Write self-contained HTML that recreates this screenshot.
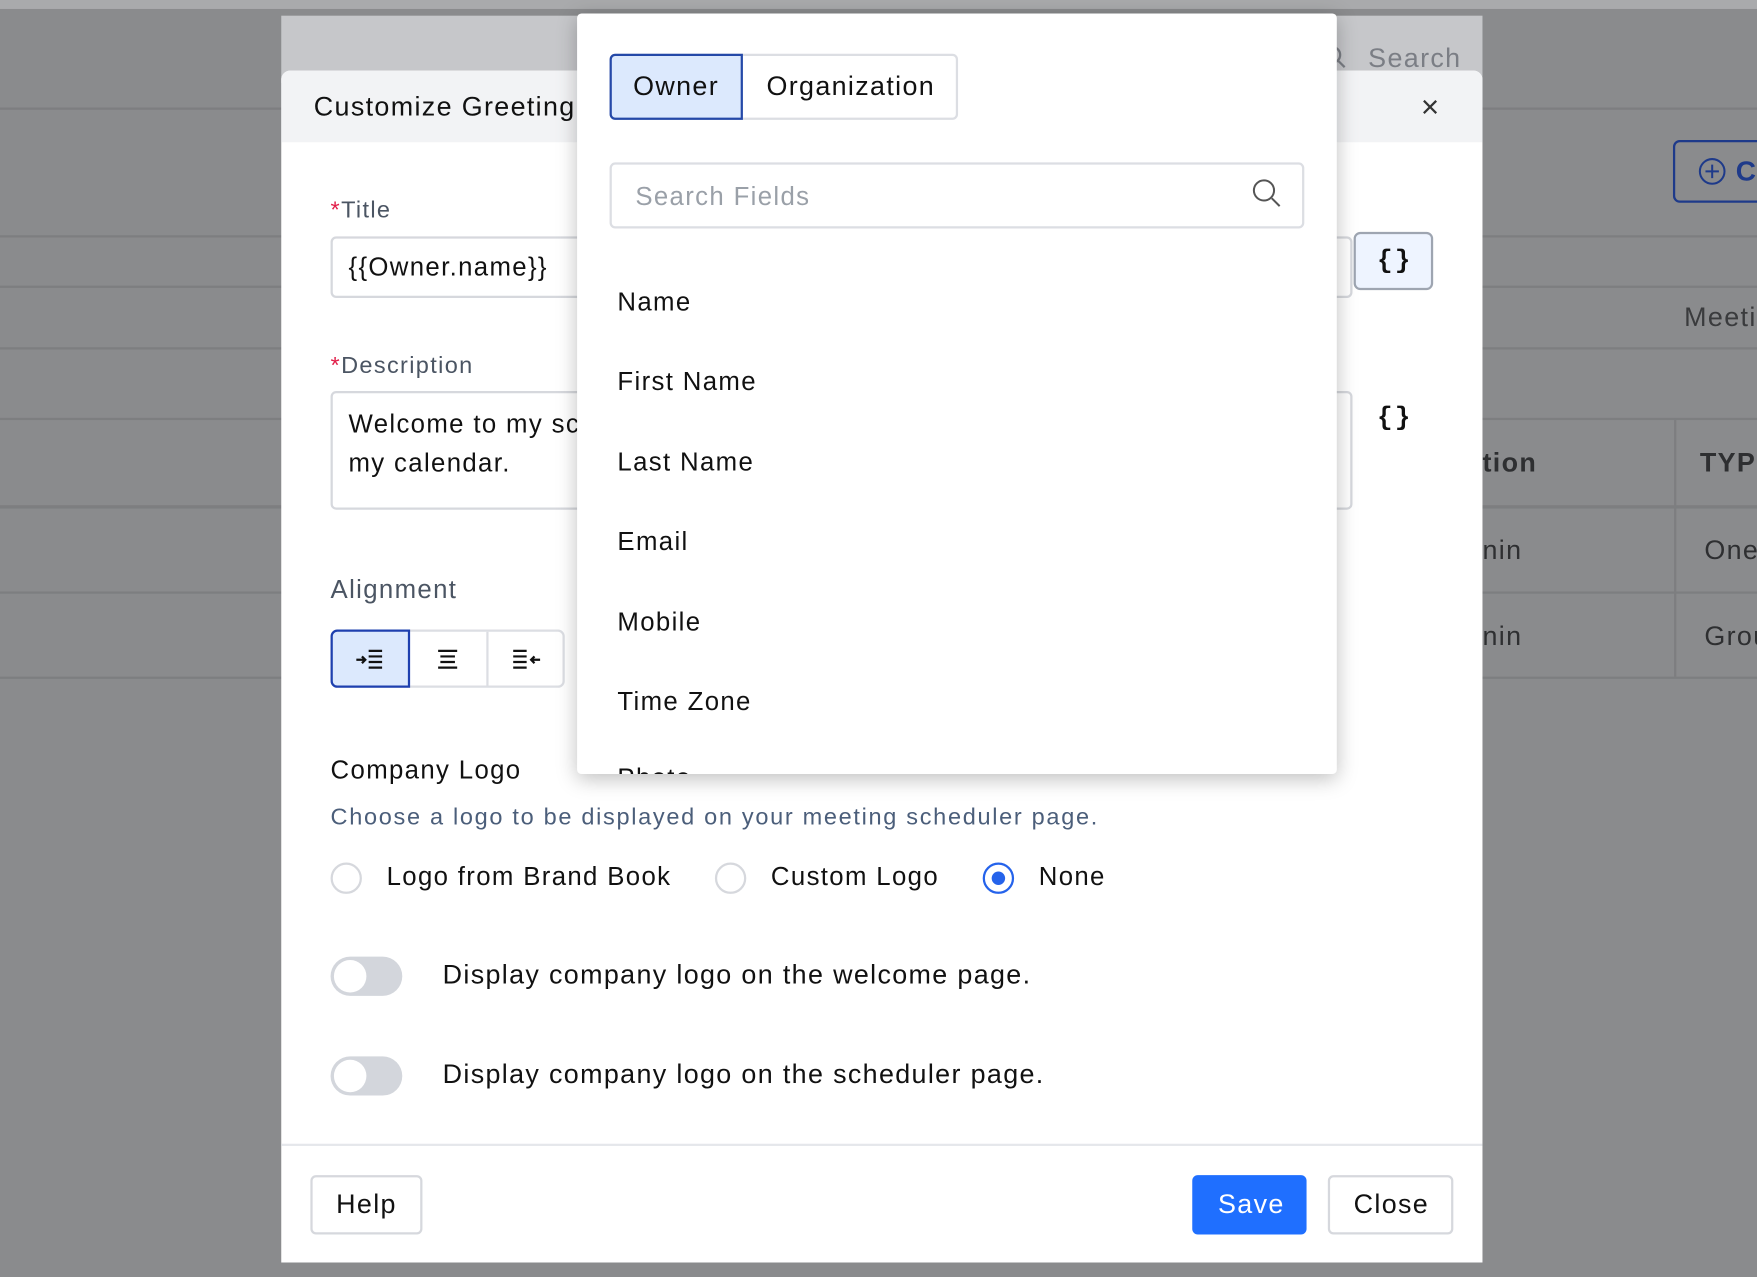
<!DOCTYPE html>
<html><head><meta charset="utf-8"><style>
*{box-sizing:border-box;margin:0;padding:0}
html,body{width:1757px;height:1277px;overflow:hidden;background:#8a8b8d;font-family:"Liberation Sans",sans-serif}
#w{position:absolute;left:0;top:0;width:1568px;height:1140px;transform:scale(1.12054,1.1202);transform-origin:0 0;background:#8a8b8d}
.a{position:absolute}
.hl{position:absolute;left:0;width:1568px;height:2px;background:#7d7e80}
.t{position:absolute;white-space:nowrap;line-height:1;letter-spacing:1.2px}
</style></head><body><div id="w">
<div class="a" style="left:0;top:0;width:1568px;height:8px;background:#a9aaac"></div>
<div class="hl" style="top:96px"></div><div class="hl" style="top:210px"></div><div class="hl" style="top:255px"></div><div class="hl" style="top:310px"></div><div class="hl" style="top:373px"></div><div class="hl" style="top:451px;height:3px"></div><div class="hl" style="top:528px"></div><div class="hl" style="top:604px"></div>
<div class="a" style="left:1494px;top:374px;width:2px;height:230px;background:#7d7e80"></div>
<div class="a" style="left:1493px;top:125px;width:90px;height:56px;border:2px solid #1e3a8a;border-radius:6px"></div>
<svg class="a" style="left:1515px;top:140px" width="26" height="26"><circle cx="13" cy="13" r="11" fill="none" stroke="#1e3a8a" stroke-width="1.8"/><path d="M13 7v12M7 13h12" stroke="#1e3a8a" stroke-width="1.8"/></svg>
<div class="t" style="left:1549px;top:141px;font-size:25px;font-weight:bold;color:#1e3a8a">C</div>
<div class="t" style="left:1503px;top:272px;font-size:24px;color:#3a3b3d">Meeting</div>
<div class="t" style="left:1517px;top:402px;font-size:24px;font-weight:bold;color:#2e2f31">TYPE</div>
<div class="t" style="left:1521px;top:480px;font-size:24px;color:#2e2f31">One</div>
<div class="t" style="left:1521px;top:557px;font-size:24px;color:#2e2f31">Group</div>
<div class="t" style="left:1323px;top:402px;font-size:24px;font-weight:bold;color:#2e2f31">tion</div>
<div class="t" style="left:1323px;top:480px;font-size:24px;color:#2e2f31">nin</div>
<div class="t" style="left:1323px;top:557px;font-size:24px;color:#2e2f31">nin</div>
<div class="a" style="left:251px;top:14px;width:1072px;height:60px;background:#c6c7ca"></div>
<svg class="a" style="left:1180px;top:40px" width="24" height="24"><circle cx="9" cy="9" r="7" fill="none" stroke="#7b7e85" stroke-width="2"/><path d="M14 14l6 6" stroke="#7b7e85" stroke-width="2"/></svg>
<div class="t" style="left:1221px;top:41px;font-size:24px;color:#7b7e85">Search</div>
<div class="a" style="left:251px;top:63px;width:1072px;height:1064px;background:#fff;border-radius:8px 8px 0 0;overflow:hidden">
 <div class="a" style="left:0;top:0;width:1072px;height:64px;background:#f2f3f5"></div>
</div>
<div class="t" style="left:280px;top:84px;font-size:24px;color:#111">Customize Greeting</div>
<div class="t" style="left:1268px;top:82px;font-size:28px;color:#333">×</div>
<div class="t" style="left:295px;top:177px;font-size:21px;color:#4b5563"><span style="color:#e11d48">*</span>Title</div>
<div class="a" style="left:295px;top:211px;width:912px;height:55px;border:2px solid #d6d8dd;border-radius:5px"></div>
<div class="t" style="left:311px;top:227px;font-size:23px;color:#111">{{Owner.name}}</div>
<div class="a" style="left:1208px;top:207px;width:71px;height:52px;border:2px solid #9ea5b1;border-radius:6px;background:#eef4ff"></div>
<div class="t" style="left:1229px;top:222px;font-size:23px;font-weight:bold;font-family:'Liberation Mono',monospace;color:#111;letter-spacing:2px">{}</div>
<div class="t" style="left:295px;top:316px;font-size:21px;color:#4b5563"><span style="color:#e11d48">*</span>Description</div>
<div class="a" style="left:295px;top:349px;width:912px;height:106px;border:2px solid #d6d8dd;border-radius:5px"></div>
<div class="t" style="left:311px;top:361px;font-size:23px;color:#111;line-height:35px">Welcome to my sc<br>my calendar.</div>
<div class="t" style="left:1229px;top:362px;font-size:23px;font-weight:bold;font-family:'Liberation Mono',monospace;color:#111;letter-spacing:2px">{}</div>
<div class="t" style="left:295px;top:515px;font-size:23px;color:#4b5563">Alignment</div>
<div class="a" style="left:295px;top:562px;width:209px;height:52px;border:2px solid #dcdee3;border-radius:6px"></div>
<div class="a" style="left:295px;top:562px;width:71px;height:52px;border:2px solid #1e40af;border-radius:6px 0 0 6px;background:#dce9fd"></div>
<div class="a" style="left:434px;top:564px;width:2px;height:48px;background:#dcdee3"></div>
<svg class="a" style="left:316px;top:578px" width="30" height="22"><path d="M2 11h8M7 8l3 3-3 3M13 3h12M13 8h12M13 13h12M13 18h12" stroke="#111" stroke-width="2" fill="none"/></svg>
<svg class="a" style="left:388px;top:578px" width="24" height="22"><path d="M3 3h17M5 8h13M5 13h13M3 18h17" stroke="#111" stroke-width="2" fill="none"/></svg>
<svg class="a" style="left:456px;top:578px" width="30" height="22"><path d="M2 3h12M2 8h12M2 13h12M2 18h12M26 11h-8M21 8l-3 3 3 3" stroke="#111" stroke-width="2" fill="none"/></svg>
<div class="t" style="left:295px;top:676px;font-size:23px;color:#111">Company Logo</div>
<div class="t" style="left:295px;top:719px;font-size:21px;color:#4b5e7a;letter-spacing:1.5px">Choose a logo to be displayed on your meeting scheduler page.</div>
<div class="a" style="left:295px;top:770px;width:28px;height:28px;border-radius:50%;border:2px solid #d6d8dd"></div>
<div class="t" style="left:345px;top:771px;font-size:23px;color:#111">Logo from Brand Book</div>
<div class="a" style="left:638px;top:770px;width:28px;height:28px;border-radius:50%;border:2px solid #d6d8dd"></div>
<div class="t" style="left:688px;top:771px;font-size:23px;color:#111">Custom Logo</div>
<div class="a" style="left:877px;top:770px;width:28px;height:28px;border-radius:50%;border:2px solid #2563eb"></div>
<div class="a" style="left:885px;top:778px;width:12px;height:12px;border-radius:50%;background:#2563eb"></div>
<div class="t" style="left:927px;top:771px;font-size:23px;color:#111">None</div>
<div class="a" style="left:295px;top:854px;width:64px;height:35px;border-radius:18px;background:#d3d6dc"></div>
<div class="a" style="left:298px;top:857px;width:29px;height:29px;border-radius:50%;background:#fff"></div>
<div class="t" style="left:395px;top:859px;font-size:24px;color:#111">Display company logo on the welcome page.</div>
<div class="a" style="left:295px;top:943px;width:64px;height:35px;border-radius:18px;background:#d3d6dc"></div>
<div class="a" style="left:298px;top:946px;width:29px;height:29px;border-radius:50%;background:#fff"></div>
<div class="t" style="left:395px;top:948px;font-size:24px;color:#111">Display company logo on the scheduler page.</div>
<div class="a" style="left:251px;top:1021px;width:1072px;height:2px;background:#e5e7eb"></div>
<div class="a" style="left:277px;top:1049px;width:100px;height:53px;border:2px solid #d6d8dd;border-radius:5px"></div>
<div class="t" style="left:300px;top:1064px;font-size:24px;color:#111">Help</div>
<div class="a" style="left:1064px;top:1049px;width:102px;height:53px;background:#1f6fff;border-radius:5px"></div>
<div class="t" style="left:1087px;top:1064px;font-size:24px;color:#fff">Save</div>
<div class="a" style="left:1185px;top:1049px;width:112px;height:53px;border:2px solid #d6d8dd;border-radius:5px"></div>
<div class="t" style="left:1208px;top:1064px;font-size:24px;color:#111">Close</div>
<div class="a" style="left:515px;top:12px;width:678px;height:679px;background:#fff;border-radius:4px;box-shadow:0 4px 18px rgba(0,0,0,.25);overflow:hidden">
 <div class="a" style="left:29px;top:36px;width:311px;height:59px;border:2px solid #dcdee3;border-radius:5px"></div>
 <div class="a" style="left:29px;top:36px;width:119px;height:59px;border:2px solid #2549a8;border-radius:5px 0 0 5px;background:#dce9fd"></div>
 <div class="t" style="left:50px;top:54px;font-size:24px;color:#111">Owner</div>
 <div class="t" style="left:169px;top:54px;font-size:24px;color:#111">Organization</div>
 <div class="a" style="left:29px;top:133px;width:620px;height:59px;border:2px solid #dcdee3;border-radius:5px"></div>
 <div class="t" style="left:52px;top:152px;font-size:23px;color:#9aa0a8">Search Fields</div>
 <svg class="a" style="left:601px;top:146px" width="30" height="30"><circle cx="12" cy="12" r="9" fill="none" stroke="#555" stroke-width="1.8"/><path d="M19 19l7 7" stroke="#555" stroke-width="1.8"/></svg>
 <div class="t" style="left:36px;top:246px;font-size:23px;color:#111">Name</div>
 <div class="t" style="left:36px;top:317px;font-size:23px;color:#111">First Name</div>
 <div class="t" style="left:36px;top:389px;font-size:23px;color:#111">Last Name</div>
 <div class="t" style="left:36px;top:460px;font-size:23px;color:#111">Email</div>
 <div class="t" style="left:36px;top:532px;font-size:23px;color:#111">Mobile</div>
 <div class="t" style="left:36px;top:603px;font-size:23px;color:#111">Time Zone</div>
 <div class="t" style="left:36px;top:671px;font-size:23px;color:#111">Photo</div>
</div>
</div></body></html>
